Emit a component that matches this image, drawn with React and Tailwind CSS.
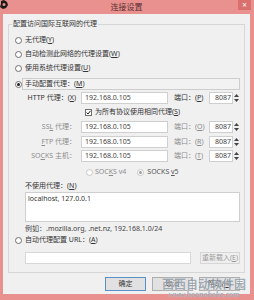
const Radio = ({ checked, disabled }) => (
  <span
    className={`flex h-[7px] w-[7px] shrink-0 items-center justify-center rounded-full border bg-white ${
      disabled ? "border-[#c8c8c8]" : "border-[#707070]"
    }`}
  >
    {checked && (
      <span className={`h-[3px] w-[3px] rounded-full ${disabled ? "bg-[#a0a0a0]" : "bg-[#1e1e1e]"}`} />
    )}
  </span>
);

const Spinner = () => (
  <span className="flex h-[12px] w-[7px] flex-col items-center justify-center gap-[2px]">
    <svg width="5" height="3" viewBox="0 0 5 3">
      <path d="M2.5 0 L5 3 L0 3 Z" fill="#444" />
    </svg>
    <svg width="5" height="3" viewBox="0 0 5 3">
      <path d="M0 0 L5 0 L2.5 3 Z" fill="#444" />
    </svg>
  </span>
);

const ProxyRow = ({ label, portKey, muted }) => (
  <div className="flex h-[12px] items-center pl-[7px]">
    <span className={`w-[54px] whitespace-nowrap text-right ${muted ? "text-[#8d8d8d]" : "text-[#333]"}`}>
      {label}
    </span>
    <div className="ml-[5px] flex h-[12px] w-[87px] items-center border border-[#cfcfcf] bg-white pl-[3px] text-[#444]">
      192.168.0.105
    </div>
    <span className={`ml-[6px] w-[32px] whitespace-nowrap ${muted ? "text-[#8d8d8d]" : "text-[#333]"}`}>
      端口：(<u>{portKey}</u>)
    </span>
    <div className="ml-[3px] flex h-[12px] w-[24px] items-center justify-end border border-[#cfcfcf] bg-white pr-[1px] text-[#444]">
      8087
    </div>
    <Spinner />
  </div>
);

export default function App() {
  return (
    <div className="relative flex h-[300px] w-[254px] flex-col bg-[#e8918f] pb-[6px] pl-[3px] pr-[4px] font-['Noto_Sans','Noto_Sans_CJK_SC',sans-serif] text-[7px] leading-[10px] text-[#333]">
      {/* title bar */}
      <div className="relative flex h-[14px] shrink-0 items-center justify-center">
        <svg className="absolute -left-[3px] top-0" width="8" height="9" viewBox="0 0 8 9">
          <path d="M1 1 L4 0 L7 2 L8 5 L6 8 L3 9 L0 7 L1 4 Z" fill="#1b1b1b" />
          <circle cx="4" cy="4.5" r="1.5" fill="#e8918f" />
        </svg>
        <span className="text-[8px] text-[#5a2f2f]">连接设置</span>
        <div className="absolute -right-[1px] top-0 flex h-[10px] w-[13px] items-center justify-center bg-[#d9706d] text-[8px] leading-none text-white">
          ×
        </div>
      </div>

      {/* client area */}
      <div className="flex flex-1 flex-col bg-[#f0f0f0] px-[5px]">
        <fieldset className="mt-[5px] border border-[#d6d6d6] p-0">
          <legend className="ml-[3px] px-[1px] leading-[10px] text-[#333]">配置访问国际互联网的代理</legend>
          <div className="flex flex-col pb-[8px] pl-[6px] pr-[4px] pt-[4px]">
            <div className="flex h-[14px] items-center gap-[3px]">
              <Radio />
              <span>无代理(<u>Y</u>)</span>
            </div>
            <div className="flex h-[14px] items-center gap-[3px]">
              <Radio />
              <span>自动检测此网络的代理设置(<u>W</u>)</span>
            </div>
            <div className="flex h-[14px] items-center gap-[3px]">
              <Radio />
              <span>使用系统代理设置(<u>U</u>)</span>
            </div>
            <div className="mt-[3px] flex h-[12px] items-center">
              <Radio checked />
              <div className="ml-[0px] flex h-[12px] flex-1 items-center border border-[#cdcdcd] bg-[#f2f2f2] pl-[2px]">
                手动配置代理：(<u>M</u>)
              </div>
            </div>
            <div className="mt-[2px]">
              <ProxyRow label={<>HTTP 代理：(<u>X</u>)</>} portKey="P" />
            </div>
            <div className="mt-[2px] flex h-[12px] items-center pl-[70px]">
              <span className="flex h-[7px] w-[7px] items-center justify-center border border-[#707070] bg-white">
                <svg width="5" height="5" viewBox="0 0 5 5">
                  <path d="M0.6 2.6 L2 4 L4.5 0.8" fill="none" stroke="#1e1e1e" strokeWidth="1" />
                </svg>
              </span>
              <span className="ml-[3px]">为所有协议使用相同代理(<u>S</u>)</span>
            </div>
            <div className="mt-[3px]">
              <ProxyRow label={<>SS<u>L</u> 代理：</>} portKey="O" muted />
            </div>
            <div className="mt-[3px]">
              <ProxyRow label={<><u>F</u>TP 代理：</>} portKey="R" muted />
            </div>
            <div className="mt-[2px]">
              <ProxyRow label={<>SO<u>C</u>KS 主机：</>} portKey="T" muted />
            </div>
            <div className="mt-[4px] flex h-[12px] items-center pl-[71px] text-[#8d8d8d]">
              <Radio disabled />
              <span className="ml-[2px]">SOC<u>K</u>S v4</span>
              <span className="ml-[11px]">
                <Radio checked disabled />
              </span>
              <span className="ml-[3px] text-[#555]">SOCKS <u>v</u>5</span>
            </div>
            <div className="mt-[2px] flex h-[12px] items-center pl-[10px]">
              不使用代理：(<u>N</u>)
            </div>
            <div className="ml-[10px] h-[30px] border border-[#cfcfcf] bg-white px-[2px] pt-[1px] text-[#333]">
              localhost, 127.0.0.1
            </div>
            <div className="mt-[1px] flex h-[12px] items-center pl-[10px] text-[#444]">
              例如：.mozilla.org, .net.nz, 192.168.1.0/24
            </div>
            <div className="flex h-[10px] items-center gap-[3px]">
              <Radio />
              <span>自动代理配置 URL：(<u>A</u>)</span>
            </div>
            <div className="mt-[7px] flex h-[12px] items-center pl-[10px]">
              <div className="h-[12px] w-[166px] border border-[#d8d8d8] bg-white" />
              <div className="ml-[9px] flex h-[12px] w-[40px] items-center justify-center border border-[#d6d6d6] bg-[#efefef] text-[#9a9a9a]">
                重新载入(<u>E</u>)
              </div>
            </div>
          </div>
        </fieldset>

        <div className="mt-[4px] flex h-[14px] gap-[6px] pl-[97px]">
          <button className="flex w-[41px] items-center justify-center border border-[#5b8fc9] bg-[#e1e1e1] text-[#333]">
            确定
          </button>
          <button className="flex w-[41px] items-center justify-center border border-[#adadad] bg-[#e1e1e1] text-[#333]">
            取消
          </button>
          <button className="flex w-[41px] items-center justify-center border border-[#adadad] bg-[#e1e1e1] text-[#333]">
            帮助(<u>H</u>)
          </button>
        </div>
      </div>

      {/* watermark */}
      <div className="pointer-events-none absolute bottom-[1px] right-[2px] flex w-[96px] flex-col items-center opacity-80">
        <span className="whitespace-nowrap text-[12px] font-bold leading-[13px] text-[#8f9aa5] [text-shadow:0_0_1px_#fff,0_0_1px_#fff]">
          西西自动软件园
        </span>
        <span className="whitespace-nowrap font-['Liberation_Serif',serif] text-[8px] font-bold italic leading-[8px] text-[#8f9aa5] [text-shadow:0_0_1px_#fff]">
          www.hoonohoke.com
        </span>
      </div>
    </div>
  );
}
